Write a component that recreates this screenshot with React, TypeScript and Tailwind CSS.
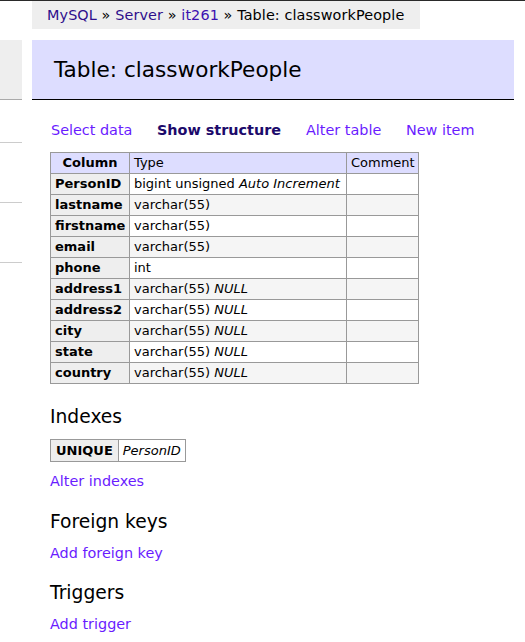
import React from "react";

const font = { fontFamily: 'Verdana, "DejaVu Sans", sans-serif' };

const rows: { name: string; type: string; extra?: string }[] = [
  { name: "PersonID", type: "bigint unsigned", extra: "Auto Increment" },
  { name: "lastname", type: "varchar(55)" },
  { name: "firstname", type: "varchar(55)" },
  { name: "email", type: "varchar(55)" },
  { name: "phone", type: "int" },
  { name: "address1", type: "varchar(55)", extra: "NULL" },
  { name: "address2", type: "varchar(55)", extra: "NULL" },
  { name: "city", type: "varchar(55)", extra: "NULL" },
  { name: "state", type: "varchar(55)", extra: "NULL" },
  { name: "country", type: "varchar(55)", extra: "NULL" },
];

export default function App() {
  return (
    <div
      className="w-[525px] min-h-[642px] bg-white text-black border-t border-[#2a2a2a] text-[14.4px] leading-[18px]"
      style={font}
    >
      {/* breadcrumb */}
      <div className="pl-[32px]">
        <div className="w-[388px] h-[28px] bg-[#eeeeee] pl-[15px] flex items-center">
          <span className="tracking-[0.1px]">
            <a className="text-[#2e0f8c]">MySQL</a> »{" "}
            <a className="text-[#2e0f8c]">Server</a> »{" "}
            <a className="text-[#3d12b0]">it261</a> » Table: classworkPeople
          </span>
        </div>
      </div>

      <div className="flex mt-[11px]">
        {/* sidebar remnants */}
        <div className="w-[22px] flex flex-col">
          <div className="h-[60px] bg-[#eeeeee] border-b border-[#aaaaaa]" />
          <div className="h-[43px] border-b border-[#cccccc]" />
          <div className="h-[60px] border-b border-[#cccccc]" />
          <div className="h-[60px] border-b border-[#cccccc]" />
        </div>

        <div className="ml-[10px] flex-1">
          <h2 className="w-[482px] h-[60px] bg-[#ddddff] border-b border-black pl-[22px] flex items-center text-[21.6px] font-normal">
            Table: classworkPeople
          </h2>

          <div className="pl-[18px]">
            <p className="mt-[21px] flex pl-[1px]">
              <a className="w-[106px] text-[#6a1cff]">Select data</a>
              <b className="w-[149px] text-[#1c0a6b]">Show structure</b>
              <a className="w-[100px] text-[#6a1cff]">Alter table</a>
              <a className="text-[#6a1cff]">New item</a>
            </p>

            <table className="mt-[13px] border-collapse table-fixed w-[368px] text-[13px] leading-[18px]">
              <colgroup>
                <col className="w-[79px]" />
                <col className="w-[217px]" />
                <col className="w-[72px]" />
              </colgroup>
              <thead>
                <tr className="bg-[#ddddff]">
                  <th className="border border-[#999999] px-[4px] py-[1px] text-center font-bold">
                    Column
                  </th>
                  <td className="border border-[#999999] px-[4px] py-[1px]">Type</td>
                  <td className="border border-[#999999] px-[4px] py-[1px]">Comment</td>
                </tr>
              </thead>
              <tbody>
                {rows.map((r, i) => (
                  <tr key={r.name} className={i % 2 === 1 ? "bg-[#f5f5f5]" : "bg-white"}>
                    <th className="border border-[#999999] px-[4px] py-[1px] text-left font-bold bg-[#eeeeee] whitespace-nowrap">
                      {r.name}
                    </th>
                    <td className="border border-[#999999] px-[4px] py-[1px] whitespace-nowrap">
                      {r.type}
                      {r.extra ? (
                        <>
                          {" "}
                          <i>{r.extra}</i>
                        </>
                      ) : null}
                    </td>
                    <td className="border border-[#999999] px-[4px] py-[1px]"></td>
                  </tr>
                ))}
              </tbody>
            </table>

            <h3 className="mt-[21px] text-[18.7px] leading-[23px] font-normal">Indexes</h3>
            <table className="mt-[11px] border-collapse text-[13px] leading-[18px]">
              <tbody>
                <tr>
                  <th className="border border-[#999999] px-[5px] py-[1.5px] font-bold bg-[#eeeeee] text-left">
                    UNIQUE
                  </th>
                  <td className="border border-[#999999] px-[4px] py-[1.5px]">
                    <i>PersonID</i>
                  </td>
                </tr>
              </tbody>
            </table>
            <p className="mt-[10px]">
              <a className="text-[#6a1cff]">Alter indexes</a>
            </p>

            <h3 className="mt-[20px] text-[18.7px] leading-[23px] font-normal">Foreign keys</h3>
            <p className="mt-[11px]">
              <a className="text-[#6a1cff]">Add foreign key</a>
            </p>

            <h3 className="mt-[19px] text-[18.7px] leading-[23px] font-normal">Triggers</h3>
            <p className="mt-[11px]">
              <a className="text-[#6a1cff]">Add trigger</a>
            </p>
          </div>
        </div>
      </div>
    </div>
  );
}
